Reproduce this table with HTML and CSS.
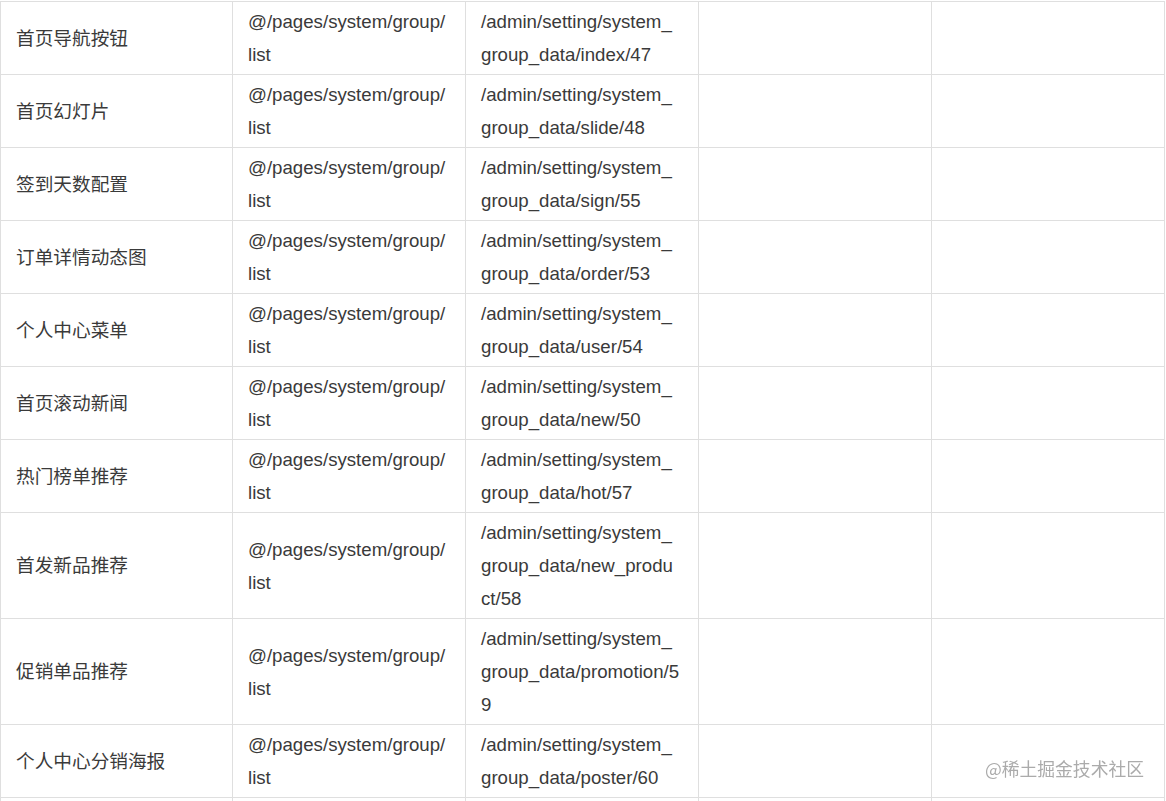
FILE: index.html
```html
<!DOCTYPE html>
<html lang="zh-CN">
<head>
<meta charset="utf-8">
<title>Table</title>
<link rel="stylesheet" href="styles.css">
</head>
<body>
<table class="route-table">
  <colgroup>
    <col class="c1"><col class="c2"><col class="c3"><col class="c4"><col class="c5">
  </colgroup>
  <tbody>
    <tr><td>首页导航按钮</td><td>@/pages/system/group/list</td><td>/admin/setting/system_group_data/index/47</td><td></td><td></td></tr>
    <tr><td>首页幻灯片</td><td>@/pages/system/group/list</td><td>/admin/setting/system_group_data/slide/48</td><td></td><td></td></tr>
    <tr><td>签到天数配置</td><td>@/pages/system/group/list</td><td>/admin/setting/system_group_data/sign/55</td><td></td><td></td></tr>
    <tr><td>订单详情动态图</td><td>@/pages/system/group/list</td><td>/admin/setting/system_group_data/order/53</td><td></td><td></td></tr>
    <tr><td>个人中心菜单</td><td>@/pages/system/group/list</td><td>/admin/setting/system_group_data/user/54</td><td></td><td></td></tr>
    <tr><td>首页滚动新闻</td><td>@/pages/system/group/list</td><td>/admin/setting/system_group_data/new/50</td><td></td><td></td></tr>
    <tr><td>热门榜单推荐</td><td>@/pages/system/group/list</td><td>/admin/setting/system_group_data/hot/57</td><td></td><td></td></tr>
    <tr><td>首发新品推荐</td><td>@/pages/system/group/list</td><td>/admin/setting/system_group_data/new_product/58</td><td></td><td></td></tr>
    <tr><td>促销单品推荐</td><td>@/pages/system/group/list</td><td>/admin/setting/system_group_data/promotion/59</td><td></td><td></td></tr>
    <tr><td>个人中心分销海报</td><td>@/pages/system/group/list</td><td>/admin/setting/system_group_data/poster/60</td><td></td><td></td></tr>
    <tr class="next-row"><td></td><td></td><td></td><td></td><td></td></tr>
  </tbody>
</table>
<div class="watermark">@稀土掘金技术社区</div>
</body>
</html>
```
FILE: styles.css
```css
html, body {
  margin: 0;
  padding: 0;
  background: #ffffff;
  overflow: hidden;
}
body {
  padding-top: 1px;
  font-family: "Liberation Sans", Arial, "Noto Sans CJK SC", sans-serif;
  color: #3a3a3a;
}
.route-table {
  border-collapse: collapse;
  table-layout: fixed;
  width: 1165px;
  font-size: 18.67px;
  line-height: 33px;
}
.c1 { width: 232px; }
.c2, .c3, .c4, .c5 { width: 233px; }
.route-table td {
  border: 1px solid #dfdfdf;
  padding: 3px 17px 3px 15px;
  vertical-align: middle;
  word-break: break-all;
  overflow-wrap: anywhere;
  height: 66px;
}
.watermark {
  position: fixed;
  right: 22px;
  bottom: 21px;
  font-family: "Noto Sans CJK SC", sans-serif;
  font-size: 17.8px;
  line-height: 24px;
  color: #ababab;
}
```
